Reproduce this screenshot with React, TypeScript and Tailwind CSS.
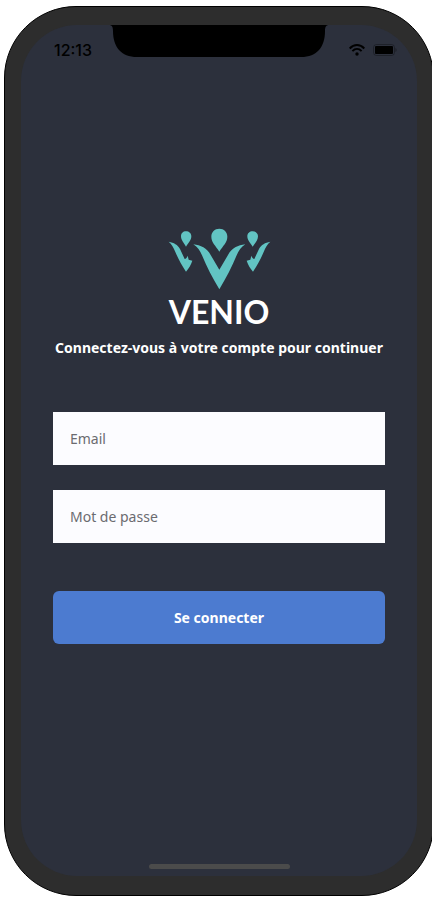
import React from "react";

const Logo: React.FC = () => (
  <svg viewBox="51 24 309 186" className="h-[62px] w-[103px]" fill="#62c4c3" aria-hidden="true">
    {/* Center figure */}
    <path d="M205 26c-14 0-24 10-24 24 0 17 13 27 24 45 11-18 24-28 24-45 0-14-10-24-24-24z" />
    <path d="M127 73c22 3 41 11 52 32l26 44 26-44c11-21 30-29 52-32-13 8-20 19-26 33-13 33-32 68-52 102-20-34-39-69-52-102-6-14-13-25-26-33z" />
    {/* Left figure */}
    <path d="M105 34c-9 0-15 6-15 15 0 12 9 20 15 31 7-11 16-19 16-31 0-9-7-15-16-15z" />
    <path d="M53 65c16 3 27 9 34 22l14 30c4-1 7-5 9-10l3 12 11 3c-4 13-11 23-19 33-13-19-23-38-32-59-5-13-11-24-20-31z" />
    {/* Right figure */}
    <path d="M305 34c-9 0-16 6-16 15 0 12 9 20 16 31 7-11 16-19 16-31 0-9-7-15-16-15z" />
    <path d="M358 65c-16 3-27 9-34 22l-14 30c-4-1-7-5-9-10l-3 12-11 3c4 13 11 23 19 33 13-19 23-38 32-59 5-13 11-24 20-31z" />
  </svg>
);

const StatusBar: React.FC = () => (
  <header className="relative flex h-[50px] items-center justify-between pl-[33px] pr-5 text-black">
    <span className="font-['Inter'] text-base font-medium">12:13</span>
    {/* Notch */}
    <svg
      viewBox="0 0 220 32"
      className="absolute left-1/2 top-0 h-8 w-[220px] -translate-x-1/2"
      aria-hidden="true"
    >
      <path d="M0 0c3 0 4 2 4 6 0 16 8 26 24 26h164c16 0 24-10 24-26 0-4 1-6 4-6z" />
    </svg>
    <div className="flex items-center gap-2">
      <svg viewBox="0 0 16 12" className="h-3 w-4" fill="none" stroke="currentColor" strokeWidth="2" aria-hidden="true">
        <path d="M.7 4.5C5-.1 11-.1 15.3 4.5M3.4 7.1c2.7-2.7 6.5-2.7 9.2 0" />
        <circle cx="8" cy="10" r="1.7" fill="currentColor" stroke="none" />
      </svg>
      <svg viewBox="0 0 24 12" className="h-3 w-6" fill="currentColor" aria-hidden="true">
        <rect x=".5" y=".5" width="21" height="11" rx="3" fill="none" stroke="currentColor" strokeOpacity=".3" />
        <rect x="2" y="2" width="18" height="8" rx="1" />
        <path d="M22.5 4c1.4.7 1.4 3.3 0 4z" fillOpacity=".4" />
      </svg>
    </div>
  </header>
);

const Login: React.FC = () => {
  const onSubmit = (event: React.FormEvent<HTMLFormElement>) => {
    event.preventDefault();
  };

  return (
    <div className="flex min-h-screen overflow-hidden bg-white pb-1 pl-1 pt-1.5 font-['Noto_Sans',sans-serif]">
      {/* Phone body */}
      <div className="-mr-0.5 flex flex-1 rounded-[72px] border border-black bg-[#2d2d2d] px-4 pb-[19px] pt-[18px]">
        {/* Screen */}
        <div className="flex flex-1 flex-col rounded-[56px] bg-[#2c303c]">
          <StatusBar />

          <main className="flex flex-1 flex-col px-8 pt-[153px]">
            <div className="flex flex-col items-center">
              <Logo />
              <h1 className="mt-0.5 font-['Lato'] text-[32px] font-bold leading-10 text-white">VENIO</h1>
              <p className="mt-1.5 whitespace-nowrap text-sm font-bold leading-5 text-white">
                Connectez-vous à votre compte pour continuer
              </p>
            </div>

            <form onSubmit={onSubmit} className="mt-[54px] flex flex-col">
              <input
                type="email"
                aria-label="Email"
                placeholder="Email"
                className="h-[53px] w-full bg-[#fcfcff] px-[17px] text-sm text-gray-800 outline-none placeholder:text-[#6b6b70]"
              />
              <input
                type="password"
                aria-label="Mot de passe"
                placeholder="Mot de passe"
                className="mt-[25px] h-[53px] w-full bg-[#fcfcff] px-[17px] text-sm text-gray-800 outline-none placeholder:text-[#6b6b70]"
              />
              <button
                type="submit"
                className="mt-12 h-[53px] w-full rounded-md bg-[#4c7bd0] text-sm font-bold text-white"
              >
                Se connecter
              </button>
            </form>
          </main>

          {/* Home indicator */}
          <div className="mx-auto mb-[7px] h-[5px] w-[141px] rounded-sm bg-[#4b4b4b]" />
        </div>
      </div>
    </div>
  );
};

export default Login;
